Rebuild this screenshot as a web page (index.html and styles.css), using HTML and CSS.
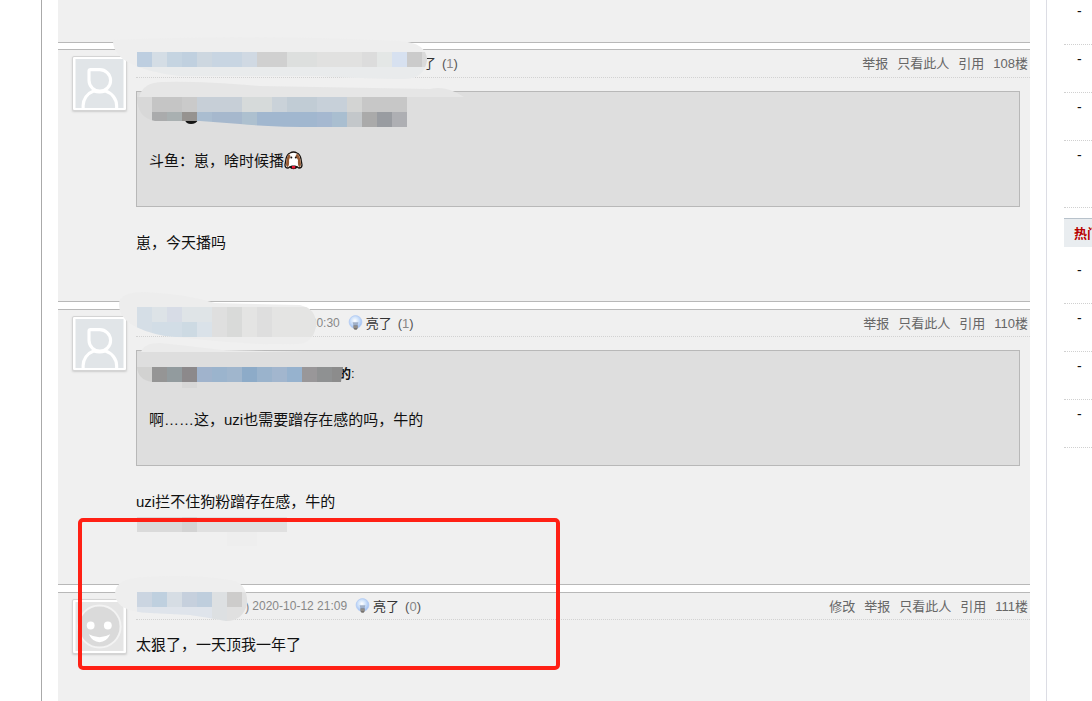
FILE: index.html
```html
<!DOCTYPE html>
<html lang="zh-CN">
<head>
<meta charset="utf-8">
<meta name="viewport" content="width=device-width, initial-scale=1">
<title>论坛回帖</title>
<link rel="stylesheet" href="styles.css">
</head>
<body>
<svg class="defs" width="0" height="0" aria-hidden="true">
  <defs>
    <radialGradient id="glass" cx="45%" cy="40%" r="60%"><stop offset="0" stop-color="#fff"/><stop offset=".5" stop-color="#cfe2fa"/><stop offset="1" stop-color="#9dbdf2"/></radialGradient>
    <symbol id="bulb" viewBox="0 0 15 16">
      <circle cx="7.5" cy="7" r="6.4" fill="url(#glass)" stroke="#b4cbf3" stroke-width=".8"/>
      <path d="M4.6 7.2h5.8l-1 4H5.6z" fill="#8d9db8" opacity=".75"/>
      <path d="M5.4 10.5h4.4v2.6L8.6 14.8H6.6L5.4 13.1z" fill="#77736f"/>
      <path d="M5.4 12h4.4" stroke="#c8c2b8" stroke-width=".7"/>
    </symbol>
    <symbol id="person" viewBox="0 0 49 50">
      <rect width="49" height="50" fill="#e1e5e8"/>
      <path d="M13.800 12.500Q13.800 10.800 15.500 10.800H24.500A11 11 0 1 1 13.800 22ZM7.800 51V48A16.500 16 0 0 1 18.500 32.600Q24.500 34.600 30.500 32.600A16.500 16 0 0 1 42 48V51" fill="none" stroke="#fff" stroke-width="3.200"/>
    </symbol>
    <symbol id="smile" viewBox="0 0 49 50">
      <rect width="49" height="50" fill="#e5e5e5"/>
      <circle cx="24.5" cy="25" r="21.500" fill="#dadada" stroke="#f3f3f3" stroke-width="2"/>
      <circle cx="15.500" cy="24" r="4" fill="#fff"/><circle cx="33" cy="24" r="4" fill="#fff"/>
      <path d="M13.500 33Q24.500 39 35.500 33Q31.500 41 24.500 41T13.500 33Z" fill="#fff"/>
    </symbol>
  </defs>
</svg>
<div class="page">
  <main class="thread">
    <article class="post post-prev"></article>

    <article class="post post-first">
      <div class="avatar"><svg role="img" aria-label="头像"><use href="#person"/></svg></div>
      <div class="content">
        <header class="head">
          <div class="meta meta-long"><svg class="bulb" aria-hidden="true"><use href="#bulb"/></svg><a class="light" href="#">亮了</a><span class="count">(<b>1</b>)</span></div>
          <nav class="actions"><a href="#">举报</a><a href="#">只看此人</a><a href="#">引用</a><a href="#">108楼</a></nav>
        </header>
        <blockquote class="quote">
          <p class="source"></p>
          <p>斗鱼：崽，啥时候播<svg class="dog" viewBox="0 0 19 19" role="img" aria-label="狗">
            <path d="M6 2Q9.500 0 13 2Q16 3 17 8L18 14Q18 17 15 17L13 16Q9.500 19 6 16L4 17Q1 17 1 14L2 8Q3 3 6 2Z" fill="#fff" stroke="#17120f" stroke-width="1.300"/>
            <path d="M5 3Q2.500 5 2 13Q2 16 4 16Q5.500 14 5 9L6.500 5ZM13 2.500Q16.500 5 17 13Q17 16 15 16Q13.500 14 14 9L11.500 5Z" fill="#965b34"/>
            <path d="M5 15.500L8 14.500H11L14 15.500L12 17.500H7Z" fill="#17120f"/><circle cx="7.300" cy="6.500" r="1" fill="#17120f"/><circle cx="11.800" cy="6.500" r="1" fill="#17120f"/><path d="M8 15h3.200v2.500H8z" fill="#ed1734"/></svg></p>
        </blockquote>
        <div class="body"><p>崽，今天播吗</p></div>
      </div>
      <svg class="mask" viewBox="58 50 420 90" width="420" height="90" aria-hidden="true">
        <clipPath id="c1"><path d="M113 40Q250 34 400 41Q427 43 427 60Q425 78 405 79Q370 79 320 76L180 76Q112 68 113 40Z"/></clipPath>
        <g clip-path="url(#c1)">
          <path d="M110 30h320v60H110z" fill="#eee"/>
          <path d="M137 67h290v15H137z" fill="#e9ebec"/>
          <path d="M137 52h15v15h-15z" fill="#bdcee0"/><path d="M152 52h15v15h-15z" fill="#d4dde5"/><path d="M167 52h15v15h-15z" fill="#c5d4e1"/><path d="M182 52h15v15h-15z" fill="#c0d0df"/><path d="M197 52h15v15h-15z" fill="#cdd7e0"/><path d="M212 52h30v15h-30z" fill="#c8d5e2"/><path d="M242 52h15v15h-15z" fill="#d0d9e3"/><path d="M257 52h30v15h-30z" fill="#d0d0d0"/><path d="M287 52h30v15h-30z" fill="#dddfde"/><path d="M317 52h45v15h-45z" fill="#e1e1e0"/><path d="M362 52h15v15h-15z" fill="#dcdcdc"/><path d="M377 52h15v15h-15z" fill="#e4e7e6"/><path d="M392 52h15v15h-15z" fill="#d7e1f0"/><path d="M407 52h15v15h-15z" fill="#cbcbcb"/><path d="M422 52h6v15h-6z" fill="#dadada"/>
        </g>
        <path d="M139 97Q143 82 163 82Q200 81 260 86L430 89Q446 85 464 97Z" fill="#e6e6e6"/>
        <path d="M185 120h13q-2 4-7 4-5 0-6-4z" fill="#151515"/>
        <clipPath id="c2"><path d="M137 97H407V127H320Q270 127 240 124L200 121H155Q137 118 137 97Z"/></clipPath>
        <g clip-path="url(#c2)">
          <path d="M137 97h15v30h-15z" fill="#d8d8d8"/><path d="M152 97h30v15h-30z" fill="#c5c5c5"/><path d="M182 97h15v15h-15z" fill="#cacaca"/><path d="M197 97h45v15h-45z" fill="#c7cfd7"/><path d="M242 97h30v15h-30z" fill="#d6dada"/><path d="M272 97h15v15h-15z" fill="#cad2d9"/><path d="M287 97h30v15h-30z" fill="#c1ccd5"/><path d="M317 97h30v15h-30z" fill="#c7d0d9"/><path d="M347 97h15v15h-15z" fill="#d3d4d3"/><path d="M362 97h45v15h-45z" fill="#c7c7c7"/>
          <path d="M152 112h15v15h-15z" fill="#aaabac"/><path d="M167 112h15v15h-15z" fill="#a9b0b1"/><path d="M182 112h15v15h-15z" fill="#969390"/><path d="M197 112h15v15h-15z" fill="#aabdd0"/><path d="M212 112h30v15h-30z" fill="#a6b8cd"/><path d="M242 112h15v15h-15z" fill="#adc0cf"/><path d="M257 112h60v15h-60z" fill="#a1b7cf"/><path d="M317 112h15v15h-15z" fill="#a5b8d0"/><path d="M332 112h15v15h-15z" fill="#a9bed0"/><path d="M347 112h15v15h-15z" fill="#c3c7ca"/><path d="M362 112h15v15h-15z" fill="#aaa"/><path d="M377 112h15v15h-15z" fill="#999ca1"/><path d="M392 112h15v15h-15z" fill="#aeafb3"/>
        </g>
      </svg>
    </article>

    <article class="post">
      <div class="avatar"><svg role="img" aria-label="头像"><use href="#person"/></svg></div>
      <div class="content">
        <header class="head">
          <div class="meta meta-mid"><time>2020-10-12 20:30</time><svg class="bulb" aria-hidden="true"><use href="#bulb"/></svg><a class="light" href="#">亮了</a><span class="count">(<b>1</b>)</span></div>
          <nav class="actions"><a href="#">举报</a><a href="#">只看此人</a><a href="#">引用</a><a href="#">110楼</a></nav>
        </header>
        <blockquote class="quote">
          <p class="source source-name"><strong>的</strong>:</p>
          <p>啊……这，uzi也需要蹭存在感的吗，牛的</p>
        </blockquote>
        <div class="body"><p>uzi拦不住狗粉蹭存在感，牛的</p><p class="hidden-line"></p></div>
      </div>
      <svg class="mask" viewBox="58 310 420 240" width="420" height="240" aria-hidden="true">
        <clipPath id="c3"><path d="M119 305Q118 292 145 292Q185 294 215 303L300 305Q317 309 316 326Q313 344 297 344Q250 345 205 340L165 336Q119 327 119 305Z"/></clipPath>
        <g clip-path="url(#c3)">
          <path d="M115 290h205v56H115z" fill="#ededed"/>
          <path d="M137 307h15v30h-15z" fill="#d5dee6"/><path d="M152 307h15v15h-15z" fill="#dde3e7"/><path d="M167 307h15v15h-15z" fill="#d7dce6"/><path d="M182 307h30v15h-30z" fill="#dfe4e7"/><path d="M152 322h30v15h-30z" fill="#d2dde6"/><path d="M182 322h15v15h-15z" fill="#cddae3"/><path d="M197 322h15v15h-15z" fill="#dae2e9"/><path d="M212 307h15v30h-15z" fill="#dfdfdf"/><path d="M227 307h15v30h-15z" fill="#d9dad9"/><path d="M242 307h15v30h-15z" fill="#e4e4e3"/><path d="M257 307h15v30h-15z" fill="#dedede"/><path d="M272 307h45v30h-45z" fill="#e4e4e3"/>
        </g>
        <path d="M141 352Q144 343 160 343Q190 346 222 350L310 352Z" fill="#ebebeb"/>
        <path d="M137 367h15v15Q138 380 137 367z" fill="#d2d2d1"/>
        <path d="M152 367h15v15h-15z" fill="#959595"/><path d="M167 367h15v15h-15z" fill="#929b9e"/><path d="M182 367h15v15h-15z" fill="#8c898b"/><path d="M197 367h15v15h-15z" fill="#a0b3cc"/><path d="M212 367h15v15h-15z" fill="#9bb4cd"/><path d="M227 367h15v15h-15z" fill="#a0b6cd"/><path d="M242 367h15v15h-15z" fill="#8dabc8"/><path d="M257 367h15v15h-15z" fill="#9ab3cc"/><path d="M272 367h15v15h-15z" fill="#a2b6ce"/><path d="M287 367h15v15h-15z" fill="#96b2ce"/><path d="M302 367h15v15h-15z" fill="#999799"/><path d="M317 367h15v15h-15z" fill="#8f9192"/><path d="M332 367h11l-2 15h-9z" fill="#8c8c8c"/>
        <path d="M182 382h15v6h-15z" fill="#d7d7d7"/>
        <path d="M137 517h45v15h-45z" fill="#dadada"/><path d="M182 517h15v15h-15z" fill="#d3d3d3"/><path d="M197 517h90v15h-90z" fill="#e0e0e0"/><path d="M227 532h30v14h-30z" fill="#eee"/>
      </svg>
    </article>

    <article class="post post-last">
      <div class="avatar"><svg role="img" aria-label="头像"><use href="#smile"/></svg></div>
      <div class="content">
        <header class="head">
          <div class="meta meta-short"><span>)</span><time>2020-10-12 21:09</time><svg class="bulb" aria-hidden="true"><use href="#bulb"/></svg><a class="light" href="#">亮了</a><span class="count">(<b>0</b>)</span></div>
          <nav class="actions"><a href="#">修改</a><a href="#">举报</a><a href="#">只看此人</a><a href="#">引用</a><a href="#">111楼</a></nav>
        </header>
        <div class="body body-plain"><p>太狠了，一天顶我一年了</p></div>
      </div>
      <svg class="mask" viewBox="58 593 420 40" width="420" height="40" aria-hidden="true">
        <clipPath id="c4"><path d="M115 595Q114 578 145 577Q200 574 235 581Q248 586 247 604Q243 621 226 621Q205 617 190 615L150 613Q117 612 115 595Z"/></clipPath>
        <g clip-path="url(#c4)">
          <path d="M110 570h140v55H110z" fill="#eee"/>
          <path d="M137 607h75v15h-75z" fill="#dfe4eb"/><path d="M212 592h15v30h-15z" fill="#dde0e2"/><path d="M227 592h22v30h-22z" fill="#e0e0e0"/>
          <path d="M137 592h15v15h-15z" fill="#cbd5e1"/><path d="M152 592h15v15h-15z" fill="#bfd0df"/><path d="M167 592h15v15h-15z" fill="#d6dde4"/><path d="M182 592h15v15h-15z" fill="#c6d0dd"/><path d="M197 592h15v15h-15z" fill="#bfcedd"/><path d="M227 592h15v15h-15z" fill="#cdcccb"/>
        </g>
      </svg>
      <div class="marker"></div>
    </article>
  </main>

  <aside class="side">
    <ul class="links links-top"><li>-</li><li>-</li><li>-</li><li class="tall">-</li></ul>
    <h2 class="side-title">热门</h2>
    <ul class="links"><li>-</li><li>-</li><li>-</li><li>-</li></ul>
  </aside>
</div>
</body>
</html>
```

FILE: styles.css
```css
* { box-sizing: border-box; }
body {
  margin: 0;
  background: #fff;
  color: #111;
  font: 15px/23px "Liberation Sans", "Noto Sans CJK SC", sans-serif;
}
p, h2, ul, blockquote { margin: 0; padding: 0; }
a { color: inherit; text-decoration: none; }
.defs { position: absolute; }

.page {
  display: flex;
  height: 100vh;
  padding-left: 41px;
  overflow: hidden;
}
.thread {
  display: flex;
  flex: 1;
  flex-direction: column;
  min-width: 0;
  padding: 0 16px;
  border-left: 1px solid #aaa;
  border-right: 1px solid #dcdde4;
}

.post {
  position: relative;
  display: grid;
  flex: none;
  grid-template-columns: 78px minmax(0, 1fr);
  margin-bottom: 7px;
  border-top: 1px solid #b8b8b8;
  border-bottom: 1px solid #b8b8b8;
  background: #f0f0f0;
}
.post-prev {
  height: 43px;
  margin-bottom: 6px;
  border-top: 0;
}
.post-last { flex: 1; margin-bottom: 0; border-bottom: 0; }

.avatar {
  align-self: start;
  justify-self: start;
  margin: 6px 0 0 14px;
  padding: 2px;
  border: 1px solid #d4d4d4;
  border-radius: 2px;
  background: #fff;
  box-shadow: 0 1px 2px #ccc;
}
.avatar svg { display: block; width: 49px; height: 49px; }

.head {
  display: flex;
  align-items: center;
  justify-content: space-between;
  height: 27px;
  padding-right: 2px;
  border-bottom: 1px dotted #d2d2d2;
  font-size: 13px;
}
.post-first .head { height: 28px; }
.meta { display: flex; align-items: center; color: #888; }
.meta-long { padding-left: 256px; }
.meta-mid { padding-left: 109px; }
.meta-short { padding-left: 109px; }
.meta time { margin-right: 8px; font-size: 12px; }
.meta-short time { margin-left: 3px; }
.bulb { width: 15px; height: 16px; margin-right: 3px; }
.light { margin-right: 6px; color: #333; }
.count { color: #555; }
.count b { color: #888; font-weight: normal; }
.actions { display: flex; gap: 9px; color: #666; }

.quote {
  margin: 13px 10px 0 0;
  padding: 11px 12px 34px;
  border: 1px solid #b8b8b8;
  background: #dedede;
}
.source { min-height: 23px; margin-bottom: 23px; font-size: 13px; }
.source-name { padding-left: 189px; }
.dog { width: 19px; height: 19px; vertical-align: -4px; }

.body { padding: 24px 0 48px; }
.post-first .body { padding-bottom: 47px; }
.body-plain { padding-top: 13px; }
.hidden-line { height: 23px; }

.mask {
  position: absolute;
  top: 0;
  left: 0;
  overflow: visible;
  pointer-events: none;
}
.marker {
  position: absolute;
  top: -75px;
  left: 20px;
  width: 482px;
  height: 152px;
  border: 4px solid #ff2015;
  border-radius: 5px;
}

.side { width: 45px; padding-left: 17px; overflow: hidden; }
.links { list-style: none; }
.links li {
  height: 48px;
  padding: 3px 0 0 13px;
  border-bottom: 1px dotted #d0d0d0;
  font-size: 14px;
}
.links-top li:first-child { height: 45px; padding-top: 0; }
.links-top .tall { height: 67px; }
.side-title {
  height: 29px;
  margin: 10px 0 9px;
  padding-left: 10px;
  border-top: 1px solid #b8c2cb;
  background: #e9edf0;
  color: #b80000;
  font-size: 13px;
  line-height: 29px;
  white-space: nowrap;
}
```
